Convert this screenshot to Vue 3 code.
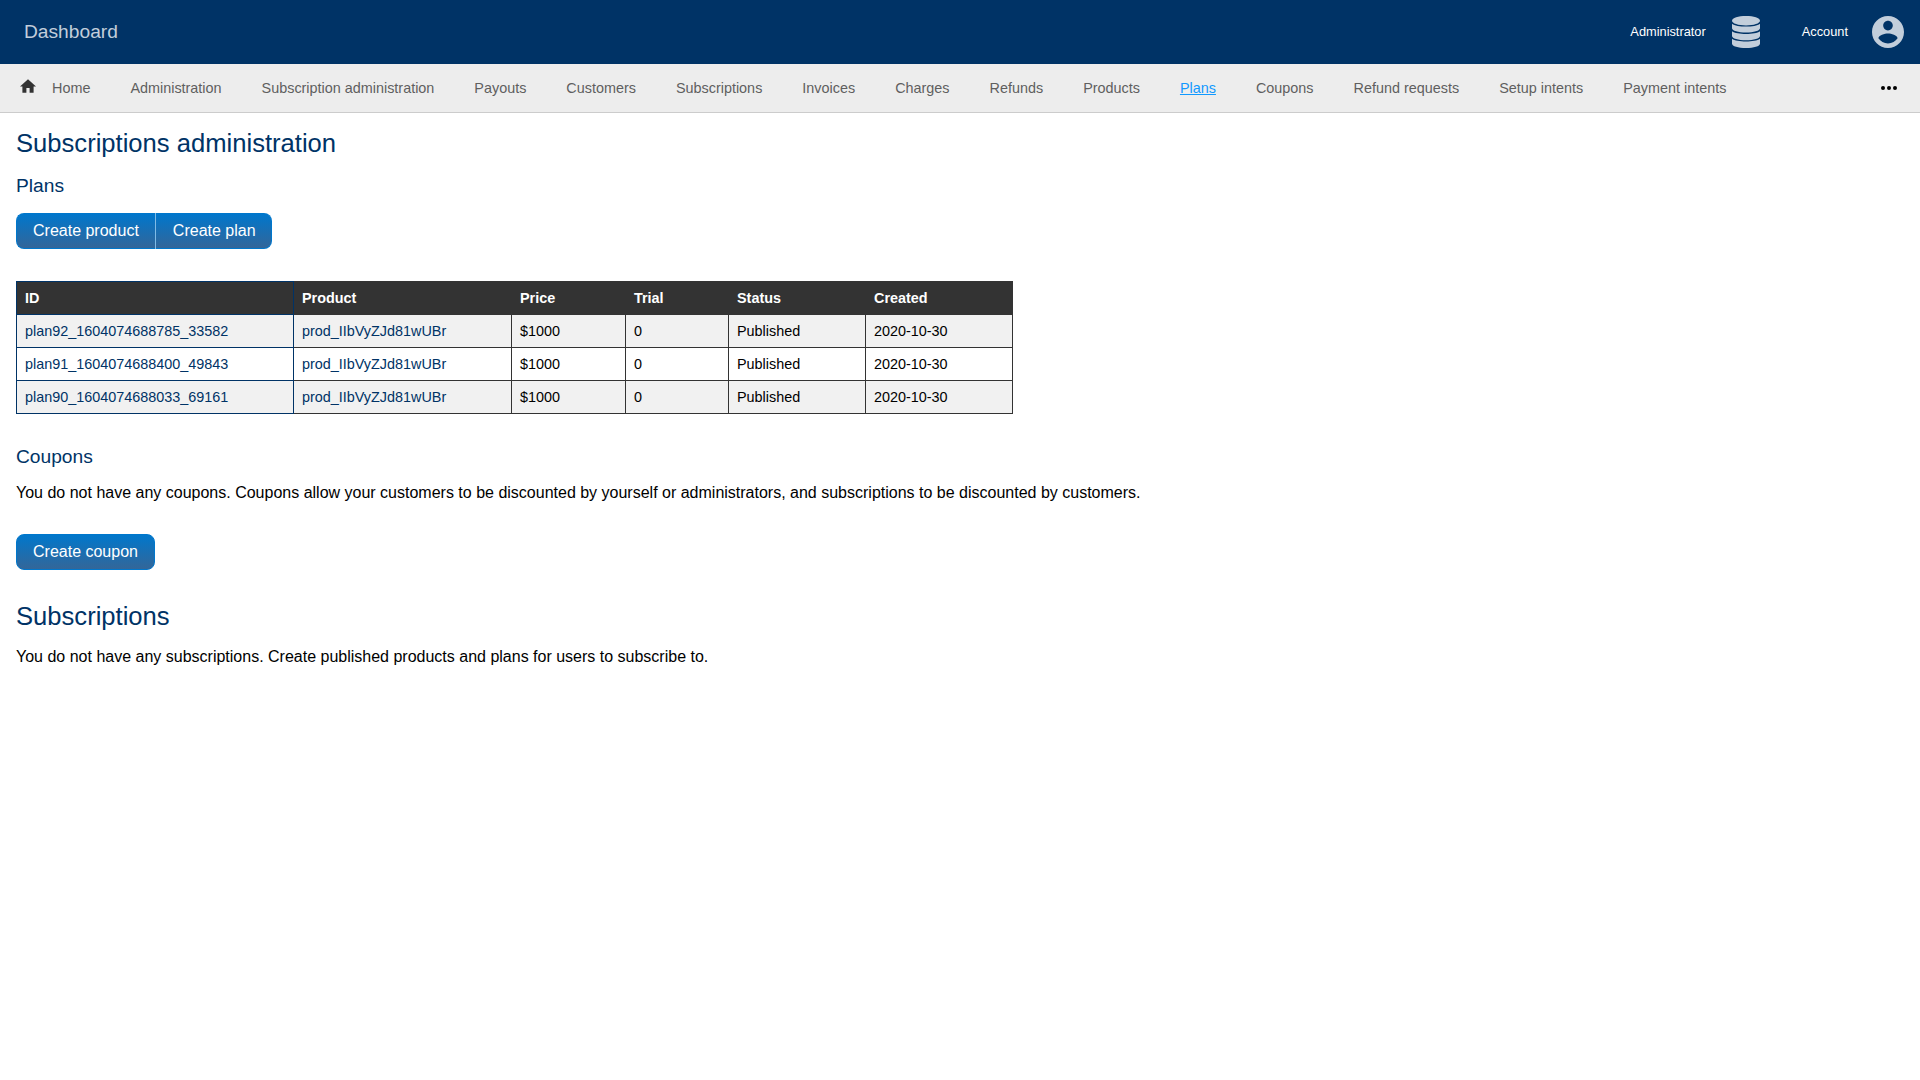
<script setup>
const links = [
  'Administration', 'Subscription administration', 'Payouts', 'Customers', 'Subscriptions',
  'Invoices', 'Charges', 'Refunds', 'Products', 'Plans', 'Coupons', 'Refund requests',
  'Setup intents', 'Payment intents',
]
const active = 'Plans'
const plans = [
  'plan92_1604074688785_33582',
  'plan91_1604074688400_49843',
  'plan90_1604074688033_69161',
].map((id) => ({ id, product: 'prod_IIbVyZJd81wUBr', price: '$1000', trial: '0', status: 'Published', created: '2020-10-30' }))
</script>

<template>
  <div class="page">
    <header class="topbar">
      <a class="brand">Dashboard</a>
      <div class="menus">
        <a class="menu-label">Administrator</a>
        <svg class="database" viewBox="0 0 28 32">
          <path d="M14 0C21.700 0 28 2 28 4.700S21.700 9.400 14 9.400 0 7.400 0 4.700 6.300 0 14 0z" />
          <path d="M0 7.700C2.500 9.600 8 10.600 14 10.600S25.500 9.600 28 7.700V12.300C28 14.700 21.700 16.600 14 16.600S0 14.700 0 12.300z" />
          <path d="M0 15.200C2.500 17 8 17.900 14 17.900S25.500 17 28 15.200V19.900C28 22.300 21.700 24.200 14 24.200S0 22.300 0 19.900z" />
          <path d="M0 22.800C2.500 24.600 8 25.500 14 25.500S25.500 24.600 28 22.800V27.700C28 30.100 21.700 32 14 32S0 30.100 0 27.700z" />
        </svg>
        <a class="menu-label account-label">Account</a>
        <svg class="account" viewBox="2 2 20 20">
          <path d="M12 2C6.480 2 2 6.480 2 12s4.480 10 10 10 10-4.480 10-10S17.520 2 12 2zm0 3c1.660 0 3 1.340 3 3s-1.340 3-3 3-3-1.340-3-3 1.340-3 3-3zm0 14.200c-2.500 0-4.710-1.280-6-3.220.03-1.990 4-3.080 6-3.080 1.990 0 5.970 1.090 6 3.080-1.290 1.940-3.500 3.220-6 3.220z" />
        </svg>
      </div>
    </header>

    <nav class="nav">
      <svg class="home" viewBox="2 3 20 17"><path d="M10 20v-6h4v6h5v-8h3L12 3 2 12h3v8z" /></svg>
      <div class="links">
        <a>Home</a>
        <a v-for="link in links" :key="link" :class="{ active: link === active }">{{ link }}</a>
      </div>
      <svg class="more" viewBox="4 10 16 4"><path d="M6 10a2 2 0 100 4 2 2 0 000-4zm12 0a2 2 0 100 4 2 2 0 000-4zm-6 0a2 2 0 100 4 2 2 0 000-4z" /></svg>
    </nav>

    <main class="content">
      <h1>Subscriptions administration</h1>
      <h2>Plans</h2>
      <div class="buttons">
        <a class="button">Create product</a>
        <a class="button">Create plan</a>
      </div>

      <table>
        <colgroup>
          <col class="c-id" /><col class="c-product" /><col class="c-price" />
          <col class="c-trial" /><col class="c-status" /><col class="c-created" />
        </colgroup>
        <thead>
          <tr><th>ID</th><th>Product</th><th>Price</th><th>Trial</th><th>Status</th><th>Created</th></tr>
        </thead>
        <tbody>
          <tr v-for="plan in plans" :key="plan.id">
            <td><a>{{ plan.id }}</a></td>
            <td><a>{{ plan.product }}</a></td>
            <td>{{ plan.price }}</td>
            <td>{{ plan.trial }}</td>
            <td>{{ plan.status }}</td>
            <td>{{ plan.created }}</td>
          </tr>
        </tbody>
      </table>

      <h2 class="coupons">Coupons</h2>
      <p>You do not have any coupons. Coupons allow your customers to be discounted by yourself or administrators, and subscriptions to be discounted by customers.</p>
      <div class="buttons coupon-buttons">
        <a class="button">Create coupon</a>
      </div>

      <h1 class="subscriptions">Subscriptions</h1>
      <p>You do not have any subscriptions. Create published products and plans for users to subscribe to.</p>
    </main>
  </div>
</template>

<style>
body { margin: 0; background: #fff; }
</style>

<style scoped>
.page { font-family: "Liberation Sans", Arial, sans-serif; font-size: 16px; color: #000; min-height: 1080px; }
.topbar { display: flex; align-items: center; justify-content: space-between; height: 64px; padding: 0 16px 0 24px; background: #003366; }
.brand { font-size: 19.2px; line-height: 24px; color: #c2cedb; }
.menus { display: flex; align-items: center; }
.menu-label { font-size: 12.8px; line-height: 16px; color: #fff; }
.database { width: 28px; height: 32px; margin-left: 26px; fill: #c2cedb; }
.account-label { margin-left: 42px; }
.account { width: 32px; height: 32px; margin-left: 24px; fill: #c2cedb; }
.nav { display: flex; align-items: center; height: 48px; padding: 0 23px 0 20px; background: #ededed; border-bottom: 1px solid #ccc; }
.home { width: 16px; height: 14px; margin: 0 16px 4px 0; fill: #333; }
.links { display: flex; gap: 40px; flex: 1; font-size: 14.4px; line-height: 16px; color: #5f5f5f; white-space: nowrap; }
.active { color: #1199ff; text-decoration: underline; }
.more { width: 16px; height: 4px; fill: #000; }
.content { padding: 16px; }
h1 { margin: 0; font-size: 25.6px; line-height: 29px; font-weight: 400; color: #003366; }
h2 { margin: 17px 0 16px; font-size: 19.2px; line-height: 22px; font-weight: 400; color: #003366; }
.buttons { display: flex; }
.button { box-sizing: border-box; height: 36px; padding: 0 15px 0 17px; border: 1px solid #0077cc; border-left-width: 0; background: linear-gradient(#0077cc, #336699); color: #fff; line-height: 34px; }
.button:first-child { padding: 0 16px; border-left-width: 1px; border-radius: 8px 0 0 8px; }
.button:last-child { border-radius: 0 8px 8px 0; }
.button:only-child { border-radius: 8px; }
.button:not(:last-child) { border-right-color: #80bbe6; }
table { table-layout: fixed; width: 997px; margin-top: 32px; border-collapse: collapse; font-size: 14.4px; line-height: 16px; }
th, td { height: 16px; padding: 8px; border: 1px solid #333; text-align: left; }
th { background: #333; color: #fff; }
th:first-child, td:first-child { border-color: #003366; }
td a { color: #003366; }
tbody tr:nth-child(odd) { background: #f1f1f1; }
.c-id { width: 277px; }
.c-product { width: 218px; }
.c-price { width: 114px; }
.c-trial { width: 103px; }
.c-status { width: 137px; }
.c-created { width: 147px; }
.coupons { margin: 32px 0 16px; }
p { margin: 0; line-height: 18px; }
.coupon-buttons { margin-top: 32px; }
.subscriptions { margin: 32px 0 17px; }
</style>
